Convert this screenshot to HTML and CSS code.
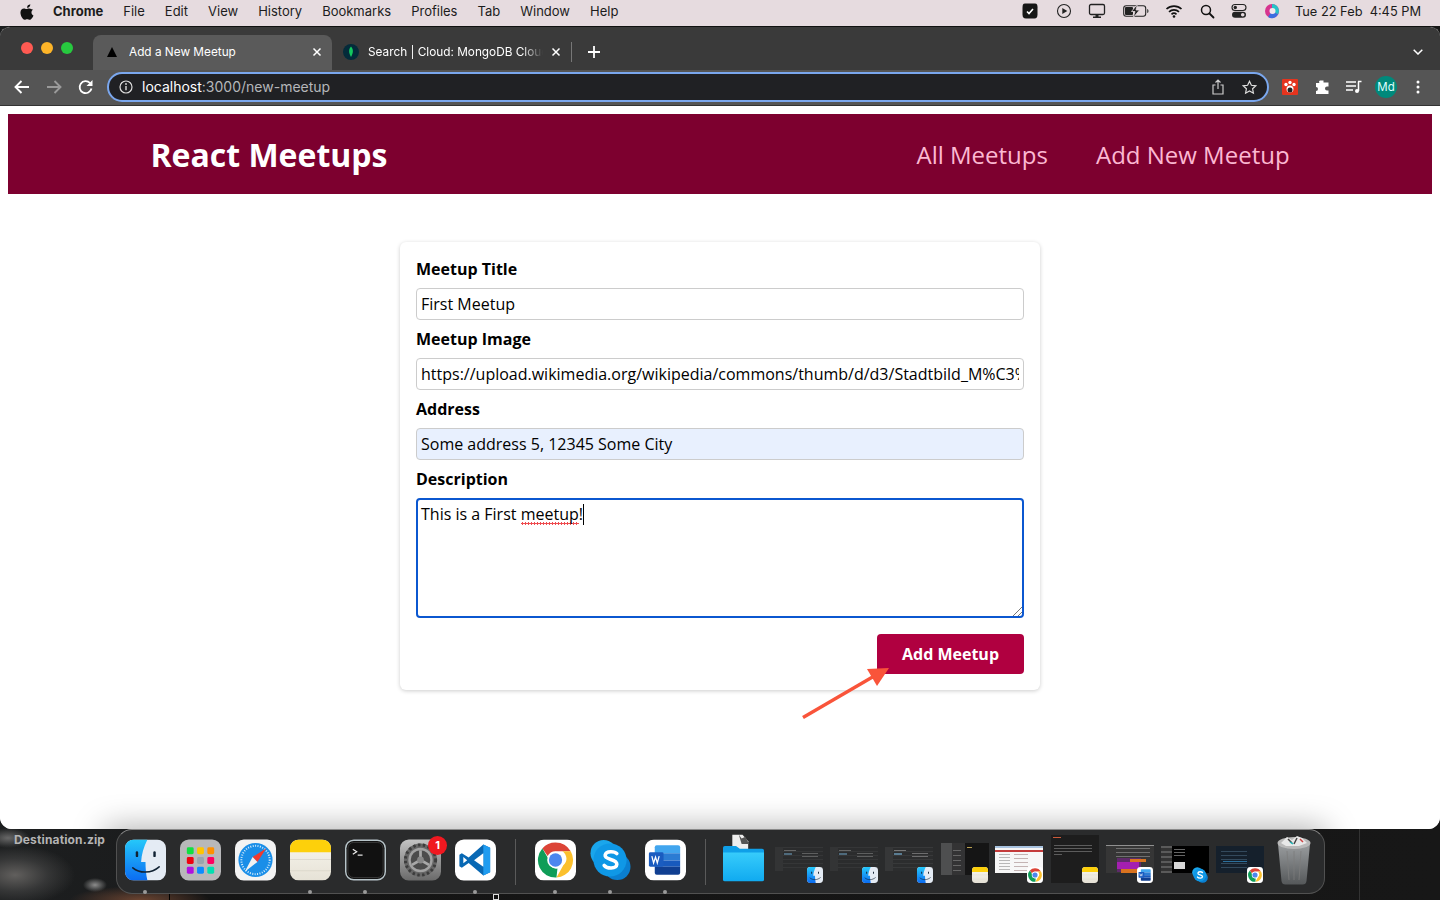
FILE: index.html
```html
<!DOCTYPE html>
<html lang="en">
<head>
<meta charset="utf-8">
<title>Add a New Meetup</title>
<link rel="stylesheet" href="styles.css">
</head>
<body>
<svg class="defs" width="0" height="0" aria-hidden="true">
  <defs>
    <linearGradient id="finderL" x1="0" y1="0" x2="0" y2="1"><stop offset="0" stop-color="#25c8fa"/><stop offset="1" stop-color="#0b6cf2"/></linearGradient>
    <linearGradient id="notesB" x1="0" y1="0" x2="0" y2="1"><stop offset="0" stop-color="#f8f6ee"/><stop offset="1" stop-color="#e6e2d6"/></linearGradient>
    <linearGradient id="folderG" x1="0" y1="0" x2="0" y2="1"><stop offset="0" stop-color="#37ccfb"/><stop offset="1" stop-color="#10aaf0"/></linearGradient>
    <linearGradient id="gearG" x1="0" y1="0" x2="0" y2="1"><stop offset="0" stop-color="#c4c4c4"/><stop offset="1" stop-color="#6a6a6a"/></linearGradient>
    <linearGradient id="trashG" x1="0" y1="0" x2="0" y2="1"><stop offset="0" stop-color="#9a9d9f"/><stop offset="1" stop-color="#55585a"/></linearGradient>
    <symbol id="i-finder" viewBox="0 0 42 42">
      <rect width="42" height="42" rx="9" fill="#e4ebf4"/>
      <path d="M9 0h14c-4 8-6 15-6.500 23H21c0 6 .5 13 2 19H9a9 9 0 0 1-9-9V9a9 9 0 0 1 9-9z" fill="url(#finderL)"/>
      <rect x="11" y="12" width="2.500" height="6" rx="1.200" fill="#123"/><rect x="29" y="12" width="2.500" height="6" rx="1.200" fill="#123"/>
      <path d="M8 29c7 6 19 6 27-1" fill="none" stroke="#123" stroke-width="1.600" stroke-linecap="round"/>
    </symbol>
    <symbol id="i-notes" viewBox="0 0 42 42">
      <rect width="42" height="42" rx="9" fill="url(#notesB)"/>
      <path d="M9 0h24a9 9 0 0 1 9 9v4H0V9a9 9 0 0 1 9-9z" fill="#fdd00b"/>
      <path d="M0 20.500h42M0 32h42" stroke="#d9d5c8" stroke-width=".8"/>
    </symbol>
    <symbol id="i-chrome" viewBox="0 0 42 42">
      <rect width="42" height="42" rx="9" fill="#fff"/>
      <path d="M21 3a18 18 0 0 1 15.600 9H21a9 9 0 0 0-8 5L7.500 9.100A18 18 0 0 1 21 3z" fill="#dc4437"/>
      <path d="M36.600 12A18 18 0 0 1 22 39l7-12.500A9 9 0 0 0 28 12z" fill="#fbc02d"/>
      <path d="M7.500 9.100 14.500 21a7.500 7.500 0 0 0 8.500 8.800L22 39A18 18 0 0 1 7.500 9.100z" fill="#0f9d58"/>
      <circle cx="21" cy="21" r="8.500" fill="#fff"/><circle cx="21" cy="21" r="6.800" fill="#4b86ee"/>
    </symbol>
    <symbol id="i-skype" viewBox="0 0 42 42">
      <circle cx="14" cy="14" r="13.500" fill="#1aa6ec"/><circle cx="28" cy="28" r="13.500" fill="#0a7fd0"/><circle cx="20.500" cy="21" r="17" fill="#0f98e6"/>
      <path d="M27.500 14.500c-2-2.500-11-3.500-12 1.500-.8 5.500 12.500 3.500 12 9.500-.5 5-10.500 4.500-13 1" fill="none" stroke="#fff" stroke-width="3.600" stroke-linecap="round"/>
    </symbol>
    <symbol id="i-word" viewBox="0 0 42 42">
      <rect width="42" height="42" rx="9" fill="#fff"/>
      <path d="M12 6h22a2 2 0 0 1 2 2v6H10V8a2 2 0 0 1 2-2z" fill="#41a5ee"/><path d="M10 14h26v7.500H10z" fill="#2b7cd3"/><path d="M10 21.500h26V28H10z" fill="#185abd"/><path d="M10 28h26v6a2 2 0 0 1-2 2H12a2 2 0 0 1-2-2z" fill="#103f91"/>
      <rect x="4" y="13" width="15" height="15" rx="1.500" fill="#1a5cc0"/>
      <path d="M7 17l1.800 7 2-6 1.800 6 1.900-7" fill="none" stroke="#fff" stroke-width="1.300"/>
    </symbol>
  </defs>
</svg>

<div class="desktop">
  <header class="menubar">
    <nav class="menu-left">
      <svg class="apple" viewBox="0 0 16 18" width="14" height="16"><path fill="#111" d="M11.800 0c.1 1.100-.3 2.100-1 2.900-.7.800-1.700 1.400-2.700 1.300-.1-1 .4-2.100 1-2.800C9.800.6 10.900.1 11.800 0zM15 6.200c-1.500 1-1.900 2.200-1.900 3.300 0 1.500.9 2.800 2.300 3.400-.4 1.200-1 2.300-1.800 3.300-.7.900-1.400 1.800-2.500 1.800s-1.500-.7-2.900-.7-1.800.7-2.900.7-1.900-1-2.600-2C1.500 14.300.5 11.900.5 9.600.5 6.600 2.500 4.900 4.500 4.900c1.100 0 2.100.8 2.800.8.700 0 1.800-.8 3.100-.8 1 0 2.100.3 2.900 1 .6.100 1.100.2 1.700.3z"/></svg>
      <span class="menu-app">Chrome</span>
      <span>File</span><span>Edit</span><span>View</span><span>History</span><span>Bookmarks</span><span>Profiles</span><span>Tab</span><span>Window</span><span>Help</span>
    </nav>
    <div class="menu-right">
      <svg width="18" height="18" viewBox="0 0 18 18"><path d="M4 1.500h10c2 0 2.500 1.500 2.500 4v7c0 2.500-1 4-3 4H5c-2.500 0-3.500-1.500-3.500-4v-7c0-2.500.5-4 2.500-4z" fill="#161616"/><path d="M6 9.500l2 2 4-4.500" fill="none" stroke="#fff" stroke-width="1.600"/></svg>
      <svg width="16" height="16" viewBox="0 0 16 16"><circle cx="8" cy="8" r="6.500" fill="none" stroke="#222" stroke-width="1.100"/><path d="M6.300 5v6l5-3z" fill="#222"/></svg>
      <svg width="18" height="16" viewBox="0 0 18 16"><rect x="1.500" y="1.500" width="15" height="10" rx="1.500" fill="none" stroke="#222" stroke-width="1.300"/><path d="M5 15h8v-1.500H10.500V12h-3v1.500H5z" fill="#222"/></svg>
      <svg width="26" height="14" viewBox="0 0 26 14"><rect x=".7" y="1.700" width="22" height="10.600" rx="2.500" fill="none" stroke="#222" stroke-width="1.100"/><rect x="2" y="3" width="8" height="8" rx="1" fill="#222"/><path d="M24 5v4c1 0 1.600-1 1.600-2S25 5 24 5z" fill="#555"/><path d="M14.500 0l-6 7.500h3.500L10 14l6.500-8H13z" fill="#222" stroke="#e6dbdf" stroke-width=".8"/></svg>
      <svg width="18" height="14" viewBox="0 0 18 14"><path d="M1.500 5a11 11 0 0 1 15 0M4 7.800a7.400 7.400 0 0 1 10 0M6.500 10.300a3.800 3.800 0 0 1 5 0" fill="none" stroke="#111" stroke-width="1.700"/><circle cx="9" cy="12.500" r="1.300" fill="#111"/></svg>
      <svg width="15" height="15" viewBox="0 0 15 15"><circle cx="6" cy="6" r="4.500" fill="none" stroke="#111" stroke-width="1.500"/><path d="M9.500 9.500l4 4" stroke="#111" stroke-width="1.800" stroke-linecap="round"/></svg>
      <svg width="16" height="16" viewBox="0 0 16 16"><rect x="1" y="1.500" width="14" height="6" rx="3" fill="none" stroke="#222" stroke-width="1.100"/><circle cx="4.300" cy="4.500" r="1.700" fill="#222"/><rect x="1" y="8.800" width="14" height="6" rx="3" fill="#222"/><circle cx="11.700" cy="11.800" r="1.800" fill="#e5dadf"/></svg>
      <svg width="16" height="16" viewBox="0 0 16 16"><circle cx="8" cy="8" r="7" fill="#d6348f"/><path d="M8 1a7 7 0 0 1 6 10.500L8 8z" fill="#25c4c8"/><path d="M14 11.500A7 7 0 0 1 4 14l4-6z" fill="#3c6ee0"/><circle cx="8.500" cy="8" r="3" fill="#f2e8ee"/></svg>
      <span class="clock">Tue 22 Feb&nbsp;&nbsp;4:45 PM</span>
    </div>
  </header>

  <div class="window">
    <div class="tabstrip">
      <div class="lights"><i class="light red"></i><i class="light amber"></i><i class="light green"></i></div>
      <div class="tab tab-active">
        <svg width="10" height="10" viewBox="0 0 10 10"><path d="M5 0l5 10H0z" fill="#000"/></svg>
        <span class="tab-title">Add a New Meetup</span>
        <svg class="tab-x" width="10" height="10" viewBox="0 0 10 10"><path d="M1.500 1.500l7 7m0-7l-7 7" stroke="#fff" stroke-width="1.500"/></svg>
      </div>
      <div class="tab tab-idle">
        <svg width="16" height="16" viewBox="0 0 16 16"><circle cx="8" cy="8" r="8" fill="#032b3a"/><path d="M8 2.500c2.200 2.500 2.800 5.500 0 10.500-2.800-5-2.200-8 0-10.500z" fill="#13c95f"/></svg>
        <span class="tab-title tab-fade">Search | Cloud: MongoDB Cloud</span>
        <svg class="tab-x" width="10" height="10" viewBox="0 0 10 10"><path d="M1.500 1.500l7 7m0-7l-7 7" stroke="#fff" stroke-width="1.500"/></svg>
      </div>
      <i class="tab-sep"></i>
      <svg class="tab-new" width="12" height="12" viewBox="0 0 12 12"><path d="M6 0v12M0 6h12" stroke="#fff" stroke-width="1.800"/></svg>
      <svg class="tab-menu" width="10" height="6" viewBox="0 0 10 6"><path d="M.7.7L5 5l4.300-4.300" fill="none" stroke="#fff" stroke-width="1.500"/></svg>
    </div>

    <div class="toolbar">
      <svg width="16" height="14" viewBox="0 0 16 14"><path d="M15 7H2M7.500 1L1.500 7l6 6" fill="none" stroke="#fff" stroke-width="1.900"/></svg>
      <svg width="16" height="14" viewBox="0 0 16 14"><path d="M1 7h13M8.500 1l6 6-6 6" fill="none" stroke="#9a9a9a" stroke-width="1.900"/></svg>
      <svg width="16" height="16" viewBox="0 0 16 16"><path d="M13.500 9.500A6 6 0 1 1 12 4" fill="none" stroke="#fff" stroke-width="1.800"/><path d="M14.500 1v6h-6z" fill="#fff"/></svg>
      <div class="omnibox">
        <svg width="14" height="14" viewBox="0 0 14 14"><circle cx="7" cy="7" r="6" fill="none" stroke="#ddd" stroke-width="1.200"/><path d="M7 6v4.200" stroke="#ddd" stroke-width="1.400"/><circle cx="7" cy="4" r=".9" fill="#ddd"/></svg>
        <span class="url"><b>localhost</b>:3000/new-meetup</span>
        <svg class="omni-share" width="12" height="16" viewBox="0 0 12 16"><path d="M3.500 6H1v9h10V6H8.500M6 10V1.200M3.500 3.500L6 1l2.500 2.500" fill="none" stroke="#ccc" stroke-width="1.200"/></svg>
        <svg width="15" height="15" viewBox="0 0 15 15"><path d="M7.500 1.300l1.900 4 4.400.5-3.200 3 .8 4.400-3.900-2.200-3.900 2.200.8-4.400-3.200-3 4.400-.5z" fill="none" stroke="#ddd" stroke-width="1.200"/></svg>
      </div>
      <svg class="tool-ext" width="16" height="16" viewBox="0 0 16 16"><rect width="16" height="16" rx="1" fill="#e5341e"/><circle cx="8" cy="10" r="3.500" fill="#fff"/><circle cx="4" cy="5.500" r="1.700" fill="#fff"/><circle cx="12" cy="5.500" r="1.700" fill="#fff"/><circle cx="8" cy="3.500" r="1.700" fill="#fff"/><circle cx="8" cy="11" r="2.500" fill="#222"/></svg>
      <svg width="16" height="16" viewBox="0 0 16 16"><path d="M6 1.500h3.500v2a1.500 1.500 0 0 0 1 0h4v4h-1.500a2 2 0 0 0 0 4H14.500v3.500H2V12a2 2 0 0 0 0-4V4h3.500a1.500 1.500 0 0 1 .5-2.500z" fill="#fff"/></svg>
      <svg class="tool-media" width="16" height="14" viewBox="0 0 16 14"><path d="M0 2h10M0 6h10M0 10h7" stroke="#fff" stroke-width="1.500"/><path d="M12 1.500h3.500M12.500 1.500V11" stroke="#fff" stroke-width="1.500"/><circle cx="11" cy="11" r="2" fill="#fff"/></svg>
      <span class="avatar">Md</span>
      <svg class="tool-dots" width="4" height="14" viewBox="0 0 4 14"><circle cx="2" cy="2" r="1.500" fill="#fff"/><circle cx="2" cy="7" r="1.500" fill="#fff"/><circle cx="2" cy="12" r="1.500" fill="#fff"/></svg>
    </div>

    <main class="page">
      <header class="site-header">
        <div class="logo">React Meetups</div>
        <nav class="site-nav"><a>All Meetups</a><a>Add New Meetup</a></nav>
      </header>
      <section class="card">
        <form class="form">
          <div class="control"><label>Meetup Title</label><input type="text" value="First Meetup"></div>
          <div class="control"><label>Meetup Image</label><input type="text" value="https://upload.wikimedia.org/wikipedia/commons/thumb/d/d3/Stadtbild_M%C3%BCnchen.jpg/2560px-Stadtbild_M%C3%BCnchen.jpg"></div>
          <div class="control"><label>Address</label><input class="autofilled" type="text" value="Some address 5, 12345 Some City"></div>
          <div class="control"><label>Description</label>
            <div class="textarea">This is a First <span class="misspelt">meetup</span>!<i class="caret"></i>
              <svg class="grip" width="9" height="9" viewBox="0 0 9 9"><path d="M0 9l9-9M5 9l4-4" stroke="#777" stroke-width="1"/></svg>
            </div>
          </div>
          <div class="actions"><button type="button">Add Meetup</button></div>
        </form>
      </section>
      <div class="dock-shadow"></div>
    </main>
  </div>

  <svg class="arrow" width="90" height="56" viewBox="0 0 90 56"><path d="M1 52.500L74 10" stroke="#f9543a" stroke-width="3.400"/><path d="M87 3L65 4 75 21z" fill="#f9543a"/></svg>

  <span class="desk-file">Destination.zip</span>
  <i class="desk-line desk-line-a"></i><i class="desk-line desk-line-b"></i><i class="desk-mini"></i>

  <footer class="dock">
    <div class="dock-item dot"><svg class="ic" viewBox="0 0 42 42"><use href="#i-finder"/></svg></div>
    <div class="dock-item">
      <svg class="ic" viewBox="0 0 42 42"><rect width="42" height="42" rx="9" fill="#b8b8ba"/>
        <rect x="7" y="8" width="7" height="7" rx="1.500" fill="#10e040"/><rect x="17.500" y="8" width="7" height="7" rx="1.500" fill="#ffc400"/><rect x="28" y="8" width="7" height="7" rx="1.500" fill="#ff9000"/>
        <rect x="7" y="18" width="7" height="7" rx="1.500" fill="#f00010"/><rect x="17.500" y="18" width="7" height="7" rx="1.500" fill="#9aa5ad"/><rect x="28" y="18" width="7" height="7" rx="1.500" fill="#ff0060"/>
        <rect x="7" y="28" width="7" height="7" rx="1.500" fill="#b010e0"/><rect x="17.500" y="28" width="7" height="7" rx="1.500" fill="#0a8cff"/><rect x="28" y="28" width="7" height="7" rx="1.500" fill="#00e0b0"/></svg>
    </div>
    <div class="dock-item">
      <svg class="ic" viewBox="0 0 42 42"><rect width="42" height="42" rx="9" fill="#f3f3f3"/><circle cx="21" cy="21" r="17.500" fill="#1a8ee8"/><circle cx="21" cy="21" r="14.500" fill="none" stroke="#d5ecfb" stroke-width="2" stroke-dasharray="1 1.500"/><path d="M32 9L18 18l5 5z" fill="#f03a30"/><path d="M10 33l8-15 5 5z" fill="#f2f2f2"/></svg>
    </div>
    <div class="dock-item dot"><svg class="ic" viewBox="0 0 42 42"><use href="#i-notes"/></svg></div>
    <div class="dock-item dot">
      <svg class="ic" viewBox="0 0 42 42"><rect width="42" height="42" rx="9" fill="#b7c4c9"/><rect x="1.500" y="1.500" width="39" height="39" rx="7.500" fill="#111"/><rect x="3" y="3" width="36" height="36" rx="6" fill="none" stroke="#3a3a3a"/><path d="M8 10l4 2.500L8 15" fill="none" stroke="#eee" stroke-width="1.200"/><path d="M13 16h5" stroke="#eee" stroke-width="1.200"/></svg>
    </div>
    <div class="dock-item">
      <svg class="ic" viewBox="0 0 42 42"><rect width="42" height="42" rx="9" fill="url(#gearG)"/><circle cx="21" cy="21" r="17" fill="#666"/><circle cx="21" cy="21" r="15.500" fill="none" stroke="#3c3c3c" stroke-width="3" stroke-dasharray="2.500 2.500"/><circle cx="21" cy="21" r="12.500" fill="#a2a2a2"/><circle cx="21" cy="21" r="10" fill="#4c4c4c"/><path d="M21 21V11M21 21l8.700 5M21 21l-8.700 5" stroke="#a8a8a8" stroke-width="2.800"/><circle cx="21" cy="21" r="3.500" fill="#888"/></svg>
      <span class="badge">1</span>
    </div>
    <div class="dock-item dot">
      <svg class="ic" viewBox="0 0 42 42"><rect width="42" height="42" rx="9" fill="#fff"/><path d="M29 5l7 3.400v25.200L29 37 14 24l-7 5-2.500-1.500v-12L7 14l7 4.500z" fill="#0868b4"/><path d="M29 5l7 3.400v25.200L29 37z" fill="#1f9cf0"/><path d="M29 14L19.500 21.300 29 28z" fill="#fff"/><path d="M8.500 18l4 3.300-4 3z" fill="#fff"/></svg>
    </div>
    <i class="dock-sep dock-sep-a"></i>
    <div class="dock-item dot"><svg class="ic" viewBox="0 0 42 42"><use href="#i-chrome"/></svg></div>
    <div class="dock-item dot"><svg class="ic" viewBox="0 0 42 42"><use href="#i-skype"/></svg></div>
    <div class="dock-item dot"><svg class="ic" viewBox="0 0 42 42"><use href="#i-word"/></svg></div>
    <i class="dock-sep dock-sep-b"></i>
    <div class="dock-item">
      <svg class="ic ic-folder" viewBox="0 0 44 52"><path d="M10 0h11l6 7v12H10z" fill="#eee"/><path d="M17 0l3 4 4-2 4 8h-8z" fill="#555"/><path d="M0 14a2 2 0 0 1 2-2h12l4 3h24a2 2 0 0 1 2 2v3H0z" fill="#0f9fe8"/><path d="M0 19h44v29a2 2 0 0 1-2 2H2a2 2 0 0 1-2-2z" fill="url(#folderG)"/></svg>
    </div>
    <div class="dock-item thumb"><div class="shot shot-low"></div><svg class="mini" viewBox="0 0 42 42"><use href="#i-finder"/></svg></div>
    <div class="dock-item thumb"><div class="shot shot-low"></div><svg class="mini" viewBox="0 0 42 42"><use href="#i-finder"/></svg></div>
    <div class="dock-item thumb"><div class="shot shot-low shot-low-alt"></div><svg class="mini" viewBox="0 0 42 42"><use href="#i-finder"/></svg></div>
    <div class="dock-item thumb"><div class="shot shot-split"></div><svg class="mini" viewBox="0 0 42 42"><use href="#i-notes"/></svg></div>
    <div class="dock-item thumb"><div class="shot shot-web"></div><svg class="mini" viewBox="0 0 42 42"><use href="#i-chrome"/></svg></div>
    <div class="dock-item thumb"><div class="shot shot-note"></div><svg class="mini" viewBox="0 0 42 42"><use href="#i-notes"/></svg></div>
    <div class="dock-item thumb"><div class="shot shot-slide"></div><svg class="mini" viewBox="0 0 42 42"><use href="#i-word"/></svg></div>
    <div class="dock-item thumb"><div class="shot shot-term"></div><svg class="mini" viewBox="0 0 42 42"><use href="#i-skype"/></svg></div>
    <div class="dock-item thumb"><div class="shot shot-code"></div><svg class="mini" viewBox="0 0 42 42"><use href="#i-chrome"/></svg></div>
    <div class="dock-item">
      <svg class="ic ic-trash" viewBox="0 0 36 50"><path d="M2 9h32l-3.500 37a4 4 0 0 1-4 3.500h-17a4 4 0 0 1-4-3.500z" fill="url(#trashG)"/><ellipse cx="18" cy="8" rx="16.500" ry="6" fill="#b9b9b9"/><path d="M5 8l6-6 5 3 5-4 5 2 5 5-8 3H10z" fill="#e8e8e8"/><path d="M12 4l4 4M21 3l-3 6" stroke="#444" stroke-width="1.500"/><path d="M24 4l3 3" stroke="#c44" stroke-width="1.500"/><path d="M14 7l3 2" stroke="#2bb" stroke-width="1.500"/><path d="M11 16l2 29M18 16v29M25 16l-2 29" stroke="#7c7c7c" stroke-width=".8"/></svg>
    </div>
  </footer>
</div>
</body>
</html>
```

FILE: styles.css
```css
* { box-sizing: border-box; }
html, body { margin: 0; padding: 0; width: 1440px; height: 900px; overflow: hidden; }
body { font-family: "Open Sans", "Noto Sans", sans-serif; background: #161616; }
.defs { position: absolute; }

.desktop {
  position: relative; width: 1440px; height: 900px; overflow: hidden;
  display: flex; flex-direction: column;
  background:
    radial-gradient(ellipse 12px 7px at 95px 885px, #8c8c8c 0%, rgba(140,140,140,0) 100%),
    radial-gradient(ellipse 22px 10px at 8px 838px, #686868 0%, rgba(90,90,90,0) 100%),
    radial-gradient(ellipse 60px 30px at 15px 875px, #615f5d 0%, rgba(70,70,70,.6) 55%, rgba(40,40,40,0) 100%),
    radial-gradient(ellipse 70px 14px at 140px 900px, #6a4330 0%, rgba(80,50,35,0) 100%),
    linear-gradient(90deg, #1c1e1f 0, #1b1c1d 168px, #141414 170px, #171717 100%);
}

/* macOS menu bar */
.menubar {
  height: 26px; flex: none; display: flex; justify-content: space-between; align-items: center;
  padding: 0 19px 4px 20px; background: #e6dbdf; color: #1c1c1c;
  font-family: Inter, "Liberation Sans", sans-serif; font-size: 13px;
}
.menu-left { display: flex; align-items: center; gap: 20px; }
.apple { margin-right: -1px; margin-top: 1px; }
.menu-app { font-weight: 700; }
.menu-right { display: flex; align-items: center; gap: 16.500px; }
.clock { margin-left: -1.500px; font-size: 12.800px; }

/* Browser window */
.window {
  height: 803px; flex: none; display: flex; flex-direction: column; overflow: hidden;
  border-radius: 10px 10px 12px 12px; border-top: 1px solid #111; background: #fff;
}
.tabstrip {
  height: 43px; flex: none; display: flex; align-items: flex-end; position: relative;
  background: #3a3a3a; color: #fff; font-family: Inter, "Liberation Sans", sans-serif; font-size: 11.800px;
  padding-left: 21px;
}
.lights { display: flex; gap: 8px; align-self: flex-start; margin-top: 15px; margin-right: 20px; }
.light { width: 12px; height: 12px; border-radius: 50%; display: block; }
.red { background: #ff5a52; } .amber { background: #fdb428; } .green { background: #27c93f; }
.tab { height: 35px; display: flex; align-items: center; padding-bottom: 2px; }
.tab-active { width: 239px; background: #5a5a5a; border-radius: 8px 8px 0 0; padding-left: 14px; padding-right: 10px; }
.tab-idle { width: 233px; padding-left: 11px; padding-right: 4px; }
.tab-title { flex: 1; margin-left: 12px; white-space: nowrap; overflow: hidden; }
.tab-idle .tab-title { margin-left: 9px; }
.tab-fade { -webkit-mask-image: linear-gradient(90deg, #000 88%, transparent 100%); mask-image: linear-gradient(90deg, #000 88%, transparent 100%); }
.tab-x { flex: none; margin-left: 8px; }
.tab-sep { width: 1px; height: 20px; background: #777; margin: 0 0 8px 6px; display: block; }
.tab-new { margin: 0 0 12px 16px; }
.tab-menu { margin: 0 17px 15px auto; }

.toolbar {
  height: 36px; flex: none; display: flex; align-items: center; gap: 16px;
  padding: 0 20px 1px 14px; background: #555; border-bottom: 1px solid #333;
}
.omnibox {
  flex: 1; height: 30px; margin-left: -3px; display: flex; align-items: center; gap: 9px;
  padding: 0 10px; background: #202124; border: 2px solid #7aa7ee; border-radius: 15px;
}
.url { flex: 1; color: #b5b7ba; font-family: Inter, "Liberation Sans", sans-serif; font-size: 14px; line-height: 18px; margin-bottom: 1px; }
.url b { color: #fff; font-weight: 400; }
.omni-share { margin-right: 9px; }
.tool-ext { margin-left: -3px; }
.tool-media { margin-right: -3px; }
.tool-dots { margin-left: 3px; }
.avatar {
  width: 22px; height: 22px; border-radius: 50%; background: #00897b; color: #dff;
  display: flex; align-items: center; justify-content: center;
  font-family: Inter, "Liberation Sans", sans-serif; font-size: 11.500px;
}

/* Page */
.page { flex: 1; position: relative; padding: 8px; background: #fff; }
.site-header {
  height: 80px; display: flex; align-items: center; justify-content: space-between;
  padding: 0 10%; background: #7d002f;
}
.logo { color: #fff; font-size: 32px; font-weight: 700; }
.site-nav { display: flex; gap: 48px; }
.site-nav a { color: #fcb8d2; font-size: 24px; }

.card {
  width: 640px; margin: 48px auto 0; padding: 16px; background: #fff;
  border-radius: 6px; box-shadow: 0 1px 4px rgba(0,0,0,.2);
}
.control { margin-bottom: 8px; }
.control label { display: block; font-size: 16px; font-weight: 700; line-height: 22px; margin-bottom: 8px; color: #000; }
.control input, .textarea {
  display: block; width: 100%; height: 32px; padding: 4px; font: 16px/22px "Open Sans", sans-serif; color: #000;
  border: 1px solid #ccc; border-radius: 4px; background: #fff; outline: 0;
}
.control input.autofilled { background: #e8f0fe; }
.textarea { height: 120px; position: relative; border: 2px solid #0b57d0; padding: 3px; }
.misspelt {
  background: radial-gradient(circle at 1.500px 1.500px, #ee4b4f 1px, transparent 1.200px) 0 100% / 3px 3px repeat-x;
}
.caret { display: inline-block; width: 1px; height: 21px; background: #000; vertical-align: -5px; }
.grip { position: absolute; right: 0; bottom: 0; }
.actions { margin-top: 16px; text-align: right; }
.actions button {
  height: 40px; width: 147px; padding: 0; font: 700 16px "Open Sans", sans-serif; color: #fff;
  background: #b00040; border: 0; border-radius: 4px;
}
.dock-shadow {
  position: absolute; left: 105px; right: 115px; bottom: -30px; height: 30px;
  box-shadow: 0 0 32px 0 rgba(0,0,0,.36);
}

/* Annotation */
.arrow { position: absolute; left: 802px; top: 665px; }

/* Desktop leftovers */
.desk-file { position: absolute; left: 14px; top: 832px; color: #b4b4b4; font: 700 12px Inter, "Liberation Sans", sans-serif; letter-spacing: .15px; }
.desk-line { position: absolute; top: 829px; bottom: 0; width: 1px; background: #000; }
.desk-line-a { left: 169px; }
.desk-line-b { left: 1359px; background: #333; }
.desk-mini { position: absolute; left: 493px; top: 894px; width: 6px; height: 6px; border: 1px solid #ddd; background: #111; }

/* Dock */
.dock {
  position: absolute; left: 116px; top: 829px; width: 1209px; height: 65px;
  display: flex; align-items: flex-start; padding: 9px 0 0 8px;
  background: #2a2b2c; border: 1px solid #515151; border-top-color: #8a8a8a; border-radius: 16px;
}
.dock-item { width: 55px; height: 52px; flex: none; position: relative; display: flex; justify-content: center; align-items: flex-start; padding-right: 14px; }
.dock-item .ic { width: 42px; height: 42px; display: block; }
.dot::after { content: ""; position: absolute; left: 18px; top: 51px; width: 4px; height: 4px; border-radius: 50%; background: #9a9a9a; }
.ic-folder { height: 50px !important; margin-top: -5px; width: 44px !important; }
.ic-trash { height: 50px !important; width: 36px !important; margin-top: -4px; }
.badge {
  position: absolute; left: 28px; top: -3px; width: 19px; height: 19px; border-radius: 50%;
  background: #f01820; color: #fff; font: 700 11px/19px Inter, sans-serif; text-align: center;
}
.dock-sep { width: 1px; height: 46px; background: #5a5a5a; flex: none; display: block; }
.dock-sep-a { margin: 0 19px 0 5px; }
.dock-sep-b { margin: 0 17px 0 5px; }
.thumb { padding: 0; justify-content: flex-start; }
.shot { position: absolute; left: -3px; top: 7px; width: 48px; height: 27px; background: #2a2a2a; filter: blur(.7px); }
.shot-low {
  top: 8px; height: 24px; opacity: .55;
  background:
    linear-gradient(#6d9fbe, #6d9fbe) 9px 6px / 8px 2px no-repeat,
    linear-gradient(#9a9a9a, #9a9a9a) 9px 3px / 12px 1px no-repeat,
    linear-gradient(#8a8a8a, #8a8a8a) 27px 6px / 16px 1px no-repeat,
    linear-gradient(#8a8a8a, #8a8a8a) 27px 9px / 16px 1px no-repeat,
    linear-gradient(90deg, #3c3d3e 0 8px, transparent 8px),
    repeating-linear-gradient(180deg, #3f4041 0 1px, #2d2e2f 1px 4px);
}
.shot-low-alt { opacity: .7; }
.shot-split {
  top: 4px; height: 32px; left: -2px;
  background:
    linear-gradient(#b9a050, #b9a050) 26px 4px / 5px 1px no-repeat,
    repeating-linear-gradient(180deg, transparent 0 4px, #666 4px 5px) 12px 3px / 8px 26px no-repeat,
    linear-gradient(90deg, #4e4f50 0 11px, #333334 11px 24px, #151515 24px);
}
.shot-web {
  top: 7px; height: 27px;
  background:
    linear-gradient(#a8c3e0, #a8c3e0) 0 0 / 100% 2px no-repeat,
    linear-gradient(#c43b3b, #c43b3b) 0 4px / 100% 2px no-repeat,
    repeating-linear-gradient(180deg, #b8b8b8 0 1px, transparent 1px 3px) 4px 8px / 11px 18px no-repeat,
    repeating-linear-gradient(180deg, #c4b4b4 0 1px, transparent 1px 4px) 19px 8px / 14px 18px no-repeat,
    #f7f7f7;
}
.shot-note {
  top: -4px; left: -2px; height: 48px;
  background:
    linear-gradient(#cc5a3a, #cc5a3a) 2px 2px / 8px 1px no-repeat,
    repeating-linear-gradient(180deg, #5c5c5c 0 1px, transparent 1px 3px) 3px 10px / 38px 8px no-repeat,
    linear-gradient(#5c5c5c, #5c5c5c) 3px 19px / 8px 1px no-repeat,
    #1d1d1d;
}
.shot-slide {
  top: 6px; left: -2px; height: 28px;
  background:
    linear-gradient(#d9731f, #d9731f) 15px 24px / 22px 4px no-repeat,
    linear-gradient(#d9731f, #d9731f) 24px 14px / 16px 3px no-repeat,
    linear-gradient(#a41fb0, #a41fb0) 11px 17px / 22px 7px no-repeat,
    linear-gradient(#5e2a6a, #5e2a6a) 11px 13px / 24px 14px no-repeat,
    repeating-linear-gradient(180deg, #707070 0 1px, transparent 1px 4px) 10px 3px / 34px 9px no-repeat,
    linear-gradient(#909090, #909090) 0 0 / 100% 1px no-repeat,
    #363636;
}
.shot-term {
  top: 7px; left: -2px; height: 27px;
  background:
    linear-gradient(#d8d8d8, #d8d8d8) 13px 16px / 11px 7px no-repeat,
    repeating-linear-gradient(180deg, #666 0 1px, transparent 1px 3px) 13px 3px / 11px 9px no-repeat,
    repeating-linear-gradient(180deg, #5a5a5a 0 2px, #333 2px 5px) 0 0 / 11px 100% no-repeat,
    #000;
}
.shot-code {
  top: 7px; left: -2px; height: 27px;
  background:
    repeating-linear-gradient(180deg, #33495c 0 1px, transparent 1px 4px) 5px 5px / 26px 18px no-repeat,
    linear-gradient(#2b6f9c, #2b6f9c) 7px 15px / 24px 1px no-repeat,
    #15202c;
}
.mini { position: absolute; left: 29px; top: 28px; width: 16px; height: 16px; }
```
